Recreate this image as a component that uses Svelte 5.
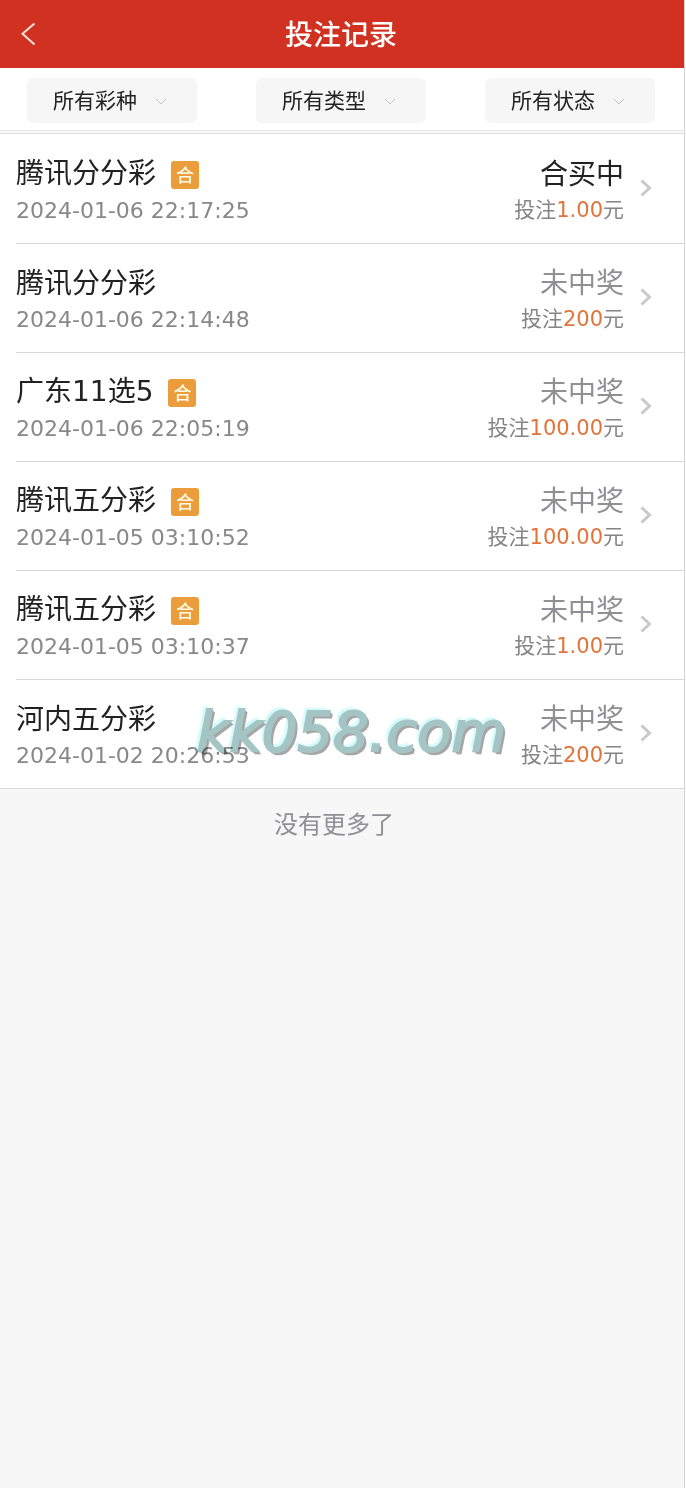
<script lang="ts">
	type Bet = {
		name: string;
		time: string;
		status: string;
		amount: string;
		shared?: boolean;
		active?: boolean;
	};

	const filters = [
		{ id: 'lottery', label: '彩种', options: ['所有彩种', '腾讯分分彩', '腾讯五分彩', '河内五分彩', '广东11选5'] },
		{ id: 'type', label: '类型', options: ['所有类型', '自购', '合买'] },
		{ id: 'status', label: '状态', options: ['所有状态', '合买中', '未中奖'] },
	];

	const bets: Bet[] = [
		{ name: '腾讯分分彩', time: '2024-01-06 22:17:25', status: '合买中', amount: '1.00', shared: true, active: true },
		{ name: '腾讯分分彩', time: '2024-01-06 22:14:48', status: '未中奖', amount: '200' },
		{ name: '广东11选5', time: '2024-01-06 22:05:19', status: '未中奖', amount: '100.00', shared: true },
		{ name: '腾讯五分彩', time: '2024-01-05 03:10:52', status: '未中奖', amount: '100.00', shared: true },
		{ name: '腾讯五分彩', time: '2024-01-05 03:10:37', status: '未中奖', amount: '1.00', shared: true },
		{ name: '河内五分彩', time: '2024-01-02 20:26:53', status: '未中奖', amount: '200' },
	];
</script>

<div class="page">
	<header class="topbar">
		<button class="back" aria-label="返回">
			<svg width="16" height="24" viewBox="0 0 16 24" fill="none" stroke="#fbe3dc" stroke-width="2">
				<path d="M14.5 1.5 2.5 11.8 14.5 22.5" />
			</svg>
		</button>
		<h1>投注记录</h1>
	</header>

	<div class="filters">
		{#each filters as filter (filter.id)}
			<div class="filter">
				<select id={filter.id} aria-label={filter.label}>
					{#each filter.options as option}
						<option>{option}</option>
					{/each}
				</select>
				<svg class="caret" width="12" height="8" viewBox="0 0 12 8" fill="none" stroke="#c4c4c4">
					<path d="M1 1 6 6 11 1" />
				</svg>
			</div>
		{/each}
	</div>

	<main class="records">
		<ul>
			{#each bets as bet}
				<li>
					<a class="row" href="#detail">
						<div class="info">
							<div class="name" class:shared={bet.shared}>
								<span class="title">{bet.name}</span>
								{#if bet.shared}
									<span class="badge">合</span>
								{/if}
							</div>
							<time class="time">{bet.time}</time>
						</div>
						<div class="result">
							<span class="status" class:active={bet.active}>{bet.status}</span>
							<span class="amount">投注<b>{bet.amount}</b>元</span>
						</div>
						<svg class="arrow" width="12" height="18" viewBox="0 0 12 18" fill="none" stroke="#c9c9cc" stroke-width="3">
							<path d="M1.5 1.5 9.5 9 1.5 16.5" />
						</svg>
					</a>
				</li>
			{/each}
		</ul>
		<div class="watermark">kk058.com</div>
	</main>

	<p class="end">没有更多了</p>
</div>

<style>
	:global(body) {
		background: #fff;
	}

	.page {
		min-height: 100vh;
		box-sizing: border-box;
		margin-right: 1px;
		border-right: 1px solid #d4d4d6;
		background: #f7f7f7;
		font-family: 'DejaVu Sans', 'Noto Sans CJK SC', sans-serif;
		color: #222;
	}

	.topbar {
		display: grid;
		grid-template-columns: 56px 1fr 56px;
		align-items: center;
		height: 68px;
		background: #d13120;
	}

	.back {
		display: flex;
		justify-content: center;
		padding: 0;
		border: 0;
		background: none;
		cursor: pointer;
	}

	h1 {
		margin: 0;
		padding: 4px 2px 0 0;
		color: #fff;
		font-size: 28px;
		font-weight: 500;
		line-height: 40px;
		text-align: center;
	}

	.filters {
		display: grid;
		grid-template-columns: repeat(3, 1fr);
		gap: 59px;
		padding: 10px 29px 7px 27px;
		background: #fff;
		border-bottom: 1px solid #e6e6e6;
	}

	.filter {
		position: relative;
	}

	select {
		appearance: none;
		display: block;
		width: 100%;
		height: 45px;
		padding: 0 44px 0 26px;
		border: 0;
		border-radius: 6px;
		background: #f6f6f6;
		color: #222;
		font-family: inherit;
		font-size: 21px;
	}

	.caret {
		position: absolute;
		right: 30px;
		top: 20px;
		pointer-events: none;
	}

	.records {
		position: relative;
		margin-top: 2px;
		background: #fff;
		border-top: 1px solid #e0e0e0;
		border-bottom: 1px solid #d8d8da;
	}

	ul {
		margin: 0;
		padding: 1px 0 0 16px;
		list-style: none;
	}

	li + li {
		border-top: 1px solid #d8d8da;
	}

	.row {
		display: flex;
		align-items: center;
		min-height: 73px;
		padding: 20px 32px 15px 0;
		color: inherit;
		text-decoration: none;
	}

	.info {
		flex: 1;
	}

	.name {
		display: flex;
		align-items: center;
		gap: 15px;
	}

	.title {
		font-size: 28px;
		line-height: 38px;
	}

	.shared .title {
		padding-bottom: 1px;
	}

	.badge {
		width: 28px;
		height: 28px;
		border-radius: 3px;
		background: #eb9d3c;
		color: #fffbe6;
		font-size: 18px;
		font-weight: 500;
		line-height: 30px;
		text-align: center;
	}

	.time {
		display: block;
		color: #888;
		font-size: 22px;
		line-height: 34px;
	}

	.result {
		display: flex;
		flex-direction: column;
		align-items: flex-end;
		padding-bottom: 2px;
	}

	.status {
		color: #8f8f94;
		font-size: 28px;
		line-height: 38px;
	}

	.status.active {
		color: #222;
	}

	.amount {
		color: #858585;
		font-size: 21px;
		line-height: 32px;
	}

	.amount b {
		color: #e2743a;
		font-weight: 400;
	}

	.arrow {
		margin: 0 0 7px 16px;
	}

	.watermark {
		position: absolute;
		right: 178px;
		bottom: 16px;
		color: #a5c5c5;
		font-size: 56px;
		font-style: italic;
		line-height: 80px;
		-webkit-text-stroke: 2px #a5c5c5;
		text-shadow: 1px 1px 0 #a6a6a6, 2px 2px 0 #a6a6a6, 3px 3px 0 #a6a6a6, -3px -3px 2px #cffafa;
		mix-blend-mode: multiply;
		pointer-events: none;
	}

	.end {
		margin: 0;
		padding: 18px 16px 18px 0;
		color: #8f8f94;
		font-size: 24px;
		line-height: 36px;
		text-align: center;
	}
</style>
